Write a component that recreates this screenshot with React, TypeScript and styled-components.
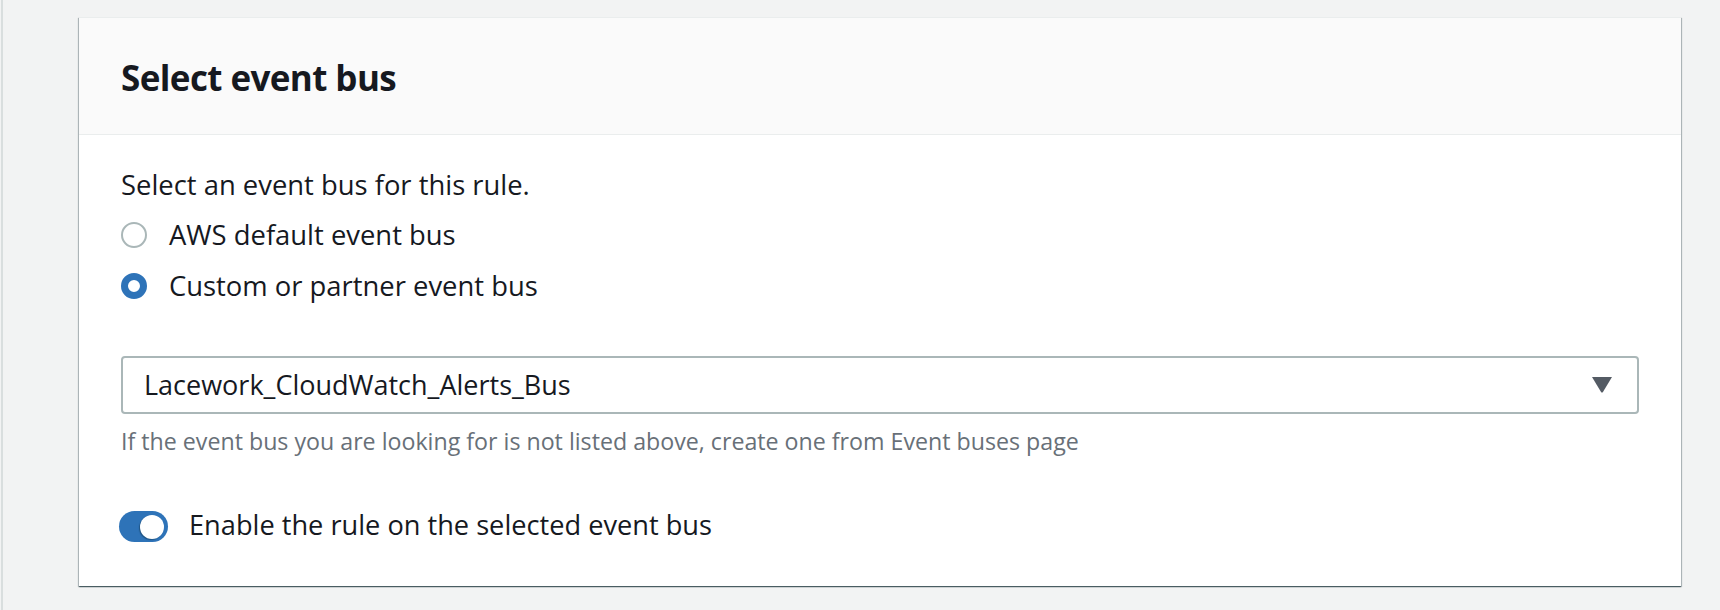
import React, { useState } from "react";
import styled, { createGlobalStyle } from "styled-components";

const GlobalStyle = createGlobalStyle`
  html, body {
    margin: 0;
    padding: 0;
    background: #f2f3f3;
    font-family: "Open Sans", "Noto Sans", Arial, sans-serif;
    color: #16191f;
  }
  * { box-sizing: border-box; }
`;

const Page = styled.div`
  min-height: 610px;
  margin-left: 1px;
  border-left: 2px solid #d9dede;
  padding: 17px 0 0 76px;
`;

const Card = styled.section`
  width: 1602px;
  height: 569px;
  background: #ffffff;
  border-top: 1px solid #eaeded;
  box-shadow: 0 1px 1px 0 rgba(0, 28, 36, 0.5), 1px 1px 1px 0 rgba(0, 28, 36, 0.22),
    -1px 1px 1px 0 rgba(0, 28, 36, 0.22);
  display: flex;
  flex-direction: column;
`;

const CardHeader = styled.header`
  height: 117px;
  background: #fafafa;
  border-bottom: 1px solid #eaeded;
  display: flex;
  align-items: center;
  padding: 4px 42px 0;
`;

const Title = styled.h2`
  margin: 0;
  font-size: 35px;
  font-weight: 700;
  letter-spacing: -0.6px;
  line-height: 48px;
  color: #16191f;
`;

const CardBody = styled.div`
  padding: 32px 42px 0;
  display: flex;
  flex-direction: column;
`;

const Text = styled.p`
  margin: 0 0 14px;
  font-size: 27.4px;
  line-height: 36px;
`;

const RadioGroup = styled.div`
  display: flex;
  flex-direction: column;
  gap: 15px;
`;

const RadioRow = styled.label`
  display: flex;
  align-items: center;
  gap: 22px;
  height: 36px;
  font-size: 27.4px;
  line-height: 36px;
  cursor: pointer;
`;

const RadioDot = styled.span<{ $checked: boolean }>`
  width: 26px;
  height: 26px;
  border-radius: 50%;
  flex: none;
  background: #fff;
  border: ${(p) => (p.$checked ? "7.5px solid #2e73b8" : "2.5px solid #aab7b8")};
`;

const SelectBox = styled.div`
  margin-top: 52px;
  height: 58px;
  border: 2px solid #aab7b8;
  border-radius: 4px;
  display: flex;
  align-items: center;
  justify-content: space-between;
  padding: 0 25px 0 21px;
  font-size: 27px;
  line-height: 36px;
`;

const Caret = styled.svg`
  width: 20px;
  height: 16px;
  flex: none;
`;

const Hint = styled.div`
  margin-top: 12px;
  font-size: 23.2px;
  line-height: 31px;
  color: #687078;
`;

const ToggleRow = styled.label`
  margin-top: 50px;
  display: flex;
  align-items: center;
  gap: 21px;
  font-size: 27.2px;
  line-height: 36px;
  cursor: pointer;
`;

const Toggle = styled.span<{ $on: boolean }>`
  position: relative;
  width: 49px;
  height: 31px;
  margin-left: -2px;
  margin-top: 3px;
  border-radius: 16px;
  flex: none;
  background: ${(p) => (p.$on ? "#2e73b8" : "#aab7b8")};

  &::after {
    content: "";
    position: absolute;
    top: 3.5px;
    left: ${(p) => (p.$on ? "21px" : "4px")};
    width: 24px;
    height: 24px;
    border-radius: 50%;
    background: #fff;
    box-shadow: -1px 1px 1px rgba(0, 28, 36, 0.35);
  }
`;

export default function App() {
  const [bus, setBus] = useState<"default" | "custom">("custom");
  const [enabled, setEnabled] = useState(true);
  return (
    <>
      <GlobalStyle />
      <Page>
        <Card>
          <CardHeader>
            <Title>Select event bus</Title>
          </CardHeader>
          <CardBody>
            <Text>Select an event bus for this rule.</Text>
            <RadioGroup>
              <RadioRow onClick={() => setBus("default")}>
                <RadioDot $checked={bus === "default"} />
                AWS default event bus
              </RadioRow>
              <RadioRow onClick={() => setBus("custom")}>
                <RadioDot $checked={bus === "custom"} />
                Custom or partner event bus
              </RadioRow>
            </RadioGroup>
            <SelectBox>
              <span>Lacework_CloudWatch_Alerts_Bus</span>
              <Caret viewBox="0 0 20 16">
                <path d="M0 0 H20 L10.8 15.2 Q10 16 9.2 15.2 Z" fill="#545b64" />
              </Caret>
            </SelectBox>
            <Hint>
              If the event bus you are looking for is not listed above, create one from Event buses page
            </Hint>
            <ToggleRow onClick={() => setEnabled(!enabled)}>
              <Toggle $on={enabled} />
              Enable the rule on the selected event bus
            </ToggleRow>
          </CardBody>
        </Card>
      </Page>
    </>
  );
}
